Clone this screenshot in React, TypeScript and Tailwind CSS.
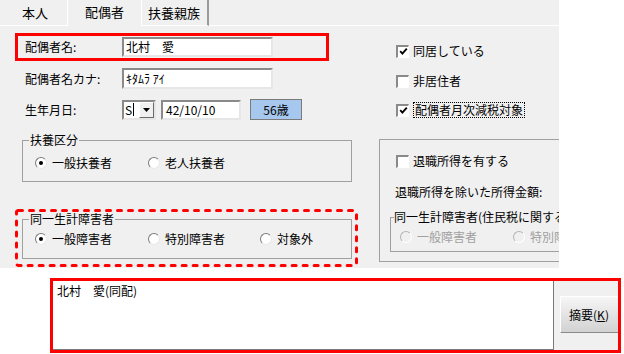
import { ReactNode } from 'react';

const sunken =
  'border-2 border-t-[#8a8a8a] border-l-[#8a8a8a] border-r-[#e6e6e6] border-b-[#e6e6e6] bg-white';

function CheckBox({ checked = false }: { checked?: boolean }) {
  return (
    <span className="flex h-[13px] w-[13px] shrink-0 items-center justify-center border-t-2 border-l-2 border-r border-b border-t-[#8a8a8a] border-l-[#8a8a8a] border-r-white border-b-white bg-white">
      {checked && (
        <svg width="9" height="9" viewBox="0 0 9 9">
          <path d="M1.2 4.2 L3.4 6.6 L7.8 1.6" fill="none" stroke="#000" strokeWidth="1.9" />
        </svg>
      )}
    </span>
  );
}

function Radio({ selected = false, disabled = false }: { selected?: boolean; disabled?: boolean }) {
  return (
    <span
      className={
        disabled
          ? 'flex h-[12px] w-[12px] shrink-0 items-center justify-center rounded-full border border-t-[#b4b4b4] border-l-[#b4b4b4] border-r-white border-b-white bg-[#f0f0f0]'
          : 'flex h-[12px] w-[12px] shrink-0 items-center justify-center rounded-full border border-t-[#7a7a7a] border-l-[#7a7a7a] border-r-[#e8e8e8] border-b-[#e8e8e8] bg-white'
      }
    >
      {selected && <span className="h-[4px] w-[4px] rounded-full bg-black" />}
    </span>
  );
}

function RadioItem({
  label,
  selected,
  disabled,
  width,
}: {
  label: string;
  selected?: boolean;
  disabled?: boolean;
  width: string;
}) {
  return (
    <div className={`flex h-[14px] items-center gap-[5px] ${width}`}>
      <Radio selected={selected} disabled={disabled} />
      <span className={disabled ? 'whitespace-nowrap text-[#a0a0a0]' : 'whitespace-nowrap'}>{label}</span>
    </div>
  );
}

function CheckRow({ label, checked, focused }: { label: ReactNode; checked?: boolean; focused?: boolean }) {
  return (
    <div className="flex h-[16px] items-center gap-[4px]">
      <CheckBox checked={checked} />
      {focused ? (
        <span className="flex h-[16px] items-center border border-dotted border-black px-px">{label}</span>
      ) : (
        <span className="whitespace-nowrap">{label}</span>
      )}
    </div>
  );
}

export default function App() {
  return (
    <div className="h-[354px] w-[624px] overflow-hidden bg-white font-['Noto_Sans_CJK_JP','Noto_Sans',sans-serif] text-[12px] leading-[14px] text-black">
      {/* tab panel */}
      <div className="h-[268px] w-[559px] overflow-hidden bg-[#f0f0f0]">
        {/* tabs */}
        <div className="flex h-[26px] text-[13px]">
          <div className="flex w-[68px] shrink-0 items-center border-r border-b border-white pl-[22px]">本人</div>
          <div className="flex w-[73px] shrink-0 items-center pb-[2px] pl-[17px]">配偶者</div>
          <div className="flex w-[68px] shrink-0 items-center border-l border-r-2 border-b border-l-white border-r-[#9a9a9a] border-b-white pl-[6px]">
            扶養親族
          </div>
          <div className="flex-1 border-b border-white" />
        </div>

        {/* body */}
        <div className="flex h-[242px]">
          {/* left column */}
          <div className="flex w-[372px] shrink-0 flex-col">
            <div className="mt-[7px] ml-[15px] flex h-[28px] w-[314px] items-center border-[3px] border-[#ff0000] pl-[7px]">
              <span className="w-[97px]">配偶者名:</span>
              <div className={`flex h-[20px] w-[151px] items-center pl-[2px] ${sunken}`}>北村　愛</div>
            </div>

            <div className="mt-[7px] flex h-[21px] items-center pl-[25px]">
              <span className="w-[97px]">配偶者名カナ:</span>
              <div className={`flex h-[21px] w-[151px] items-center pl-[2px] ${sunken}`}>ｷﾀﾑﾗ ｱｲ</div>
            </div>

            <div className="mt-[10px] flex h-[21px] items-center pl-[25px]">
              <span className="w-[97px]">生年月日:</span>
              <div className={`flex h-[20px] w-[34px] items-center pl-[1px] ${sunken}`}>
                <span>S</span>
                <span className="ml-px h-[13px] w-px bg-black" />
                <span className="ml-auto flex h-[16px] w-[15px] items-center justify-center border border-t-white border-l-white border-r-[#6a6a6a] border-b-[#6a6a6a] bg-[#f0f0f0]">
                  <svg width="7" height="4" viewBox="0 0 7 4">
                    <path d="M0 0 H7 L3.5 4 Z" fill="#000" />
                  </svg>
                </span>
              </div>
              <div className={`ml-[5px] flex h-[20px] w-[80px] items-center pl-[3px] ${sunken}`}>42/10/10</div>
              <div className="ml-[9px] flex h-[21px] w-[52px] items-center justify-center border border-[#7a7a7a] bg-[#a6c8ef]">
                56歳
              </div>
            </div>

            <fieldset className="mt-[13px] ml-[22px] w-[330px] border border-[#a0a0a0] pt-[9px] pb-[11px]">
              <legend className="ml-[6px] px-px leading-[14px]">扶養区分</legend>
              <div className="flex pl-[12px]">
                <RadioItem label="一般扶養者" selected width="w-[113px]" />
                <RadioItem label="老人扶養者" width="w-[112px]" />
              </div>
            </fieldset>

            <div className="relative mt-[27px] ml-[15px] h-[58px] w-[343px] pt-[3px] pl-[7px]">
              <fieldset className="w-[330px] border border-[#a0a0a0] pt-[6px] pb-[12px]">
                <legend className="ml-[6px] px-px leading-[14px]">同一生計障害者</legend>
                <div className="flex pl-[12px]">
                  <RadioItem label="一般障害者" selected width="w-[113px]" />
                  <RadioItem label="特別障害者" width="w-[112px]" />
                  <RadioItem label="対象外" width="w-[80px]" />
                </div>
              </fieldset>
              {/* red dashed annotation */}
              <svg className="pointer-events-none absolute inset-0" width="343" height="58" viewBox="0 0 343 58">
                <rect
                  x="1.5"
                  y="1.5"
                  width="340"
                  height="55"
                  rx="2"
                  fill="none"
                  stroke="#ff0000"
                  strokeWidth="3"
                  strokeDasharray="4 7"
                  strokeLinecap="round"
                />
              </svg>
            </div>
          </div>

          {/* right column */}
          <div className="flex flex-col">
            <div className="mt-[17px] ml-[24px]">
              <CheckRow label="同居している" checked />
            </div>
            <div className="mt-[14px] ml-[24px]">
              <CheckRow label="非居住者" />
            </div>
            <div className="mt-[13px] ml-[24px]">
              <CheckRow label="配偶者月次減税対象" checked focused />
            </div>

            <div className="mt-[21px] ml-[7px] flex h-[123px] w-[240px] flex-col border border-[#a0a0a0]">
              <div className="mt-[13px] ml-[16px]">
                <CheckRow label="退職所得を有する" />
              </div>
              <div className="mt-[16px] ml-[15px] whitespace-nowrap">退職所得を除いた所得金額:</div>
              <fieldset className="mt-[11px] ml-[10px] w-[250px] border border-[#a0a0a0] pt-[6px] pb-[7px]">
                <legend className="ml-[3px] whitespace-nowrap leading-[14px]">同一生計障害者(住民税に関する</legend>
                <div className="flex pl-[9px]">
                  <RadioItem label="一般障害者" disabled width="w-[113px]" />
                  <RadioItem label="特別障害者" disabled width="w-[112px]" />
                </div>
              </fieldset>
            </div>
          </div>
        </div>
      </div>

      {/* summary */}
      <div className="mt-[10px] ml-[50px] flex h-[75px] w-[571px] border-[3px] border-[#ff0000]">
        <div className="w-[501px] shrink-0 border-r border-b border-[#7a7a7a] bg-white pt-[3px] pl-[4px]">北村　愛(同配)</div>
        <div className="flex-1 overflow-hidden bg-[#f0f0f0]">
          <button className="mt-[15px] ml-[6px] flex h-[37px] w-[64px] items-center justify-center border border-t-white border-l-white border-r-[#8a8a8a] border-b-[#8a8a8a] bg-gradient-to-b from-[#f6f6f6] to-[#d2d2d2] pr-[6px]">
            摘要(<span className="underline">K</span>)
          </button>
        </div>
      </div>
    </div>
  );
}
